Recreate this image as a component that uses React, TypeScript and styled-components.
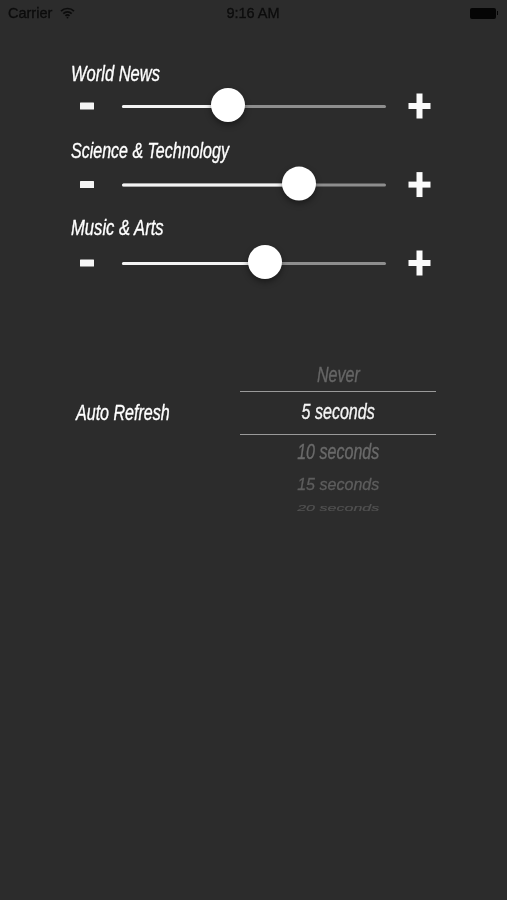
import React from 'react'
import styled, { createGlobalStyle } from 'styled-components'

const GlobalStyle = createGlobalStyle`
  html, body {
    margin: 0;
    padding: 0;
    background: #2c2c2c;
  }
`

const Screen = styled.div`
  width: 507px;
  height: 900px;
  overflow: hidden;
  background: #2c2c2c;
  font-family: "Liberation Sans", Arial, sans-serif;
  color: #fff;
`

const StatusBar = styled.div`
  height: 26px;
  padding: 0 9px 0 8px;
  display: grid;
  grid-template-columns: 1fr auto 1fr;
  align-items: center;
  color: #0c0c0c;
  font-size: 14.5px;
  -webkit-text-stroke: 0.3px #0c0c0c;
  filter: blur(0.5px);
`

const StatusLeft = styled.div`
  display: flex;
  align-items: center;
  gap: 8px;
`

const Battery = styled.div`
  justify-self: end;
  display: flex;
  align-items: center;
  gap: 1px;

  &::before {
    content: '';
    width: 26px;
    height: 11px;
    border-radius: 2px;
    background: #050505;
  }

  &::after {
    content: '';
    width: 1.5px;
    height: 4px;
    background: #050505;
  }
`

const Sliders = styled.section`
  margin-top: 32px;
  padding-left: 71px;
  display: flex;
  flex-direction: column;
  gap: 13px;
`

const Channel = styled.div`
  display: flex;
  flex-direction: column;
`

const Condensed = styled.span<{ $x?: number; $y?: number }>`
  display: inline-block;
  font-style: italic;
  white-space: nowrap;
  -webkit-text-stroke: 0.35px currentColor;
  transform: scale(${p => p.$x ?? 0.73}, ${p => p.$y ?? 1});
  filter: blur(0.3px);
`

const ChannelLabel = styled.div`
  height: 32px;
  line-height: 32px;
  font-size: 22px;

  ${Condensed} {
    transform-origin: left center;
  }
`

const SliderRow = styled.div<{ $drop: number }>`
  height: 32px;
  display: flex;
  align-items: center;
  transform: translateY(${p => p.$drop}px);
`

const StepIcon = styled.svg`
  display: block;
  flex: none;
  margin-top: -1px;
  filter: blur(0.3px);
`

const Track = styled.div`
  position: relative;
  width: 264px;
  height: 3px;
  margin: 1px 22px 0 28px;
  border-radius: 2px;
  background: #8e8e8e;
`

const TrackFill = styled.div`
  height: 100%;
  border-radius: 2px;
  background: #f4f4f4;
`

const Thumb = styled.div`
  position: absolute;
  top: 50%;
  width: 34px;
  height: 34px;
  margin: -19px 0 0 -17px;
  border-radius: 50%;
  background: #fff;
  box-shadow: 0 3px 6px rgba(0, 0, 0, 0.4);
`

const RefreshRow = styled.section`
  margin-top: 79px;
  padding-left: 76px;
  display: flex;
  align-items: flex-start;
`

const RefreshLabel = styled.div`
  width: 164px;
  margin-top: 41.5px;
  font-size: 22px;
  line-height: 32px;

  ${Condensed} {
    transform-origin: left center;
  }
`

const Picker = styled.div`
  width: 196px;
  height: 158.5px;
  overflow: hidden;
  display: flex;
  flex-direction: column;
`

const PickerItem = styled.div<{ $h: number; $lh?: number; $color: string; $selected?: boolean }>`
  flex: none;
  box-sizing: border-box;
  height: ${p => p.$h}px;
  line-height: ${p => p.$lh ?? p.$h}px;
  text-align: center;
  font-size: 22px;
  color: ${p => p.$color};
  ${p => (p.$selected ? 'border-top: 1.5px solid #9a9a9a; border-bottom: 1.5px solid #9a9a9a;' : '')}
`

const channels = [
  { name: 'World News', value: 0.387, squeeze: 0.75, drop: 0 },
  { name: 'Science & Technology', value: 0.696, squeeze: 0.728, drop: 1.6 },
  { name: 'Music & Arts', value: 0.548, squeeze: 0.755, drop: 3 },
]

const THUMB = 34
const TRACK = 264

export default function App() {
  return (
    <Screen>
      <GlobalStyle />
      <StatusBar>
        <StatusLeft>
          <span>Carrier</span>
          <svg width="15" height="12" viewBox="0 0 15 12" fill="none" stroke="#0c0c0c" strokeWidth="1.7">
            <path d="M1 4.2a9.2 9.2 0 0 1 13 0" />
            <path d="M3.3 6.6a5.9 5.9 0 0 1 8.4 0" />
            <path d="M5.5 8.8a2.8 2.8 0 0 1 4 0" />
            <circle cx="7.5" cy="10.6" r="0.9" fill="#0c0c0c" stroke="none" />
          </svg>
        </StatusLeft>
        <span>9:16 AM</span>
        <Battery />
      </StatusBar>

      <Sliders>
        {channels.map(c => {
          const center = THUMB / 2 + c.value * (TRACK - THUMB)
          return (
            <Channel key={c.name}>
              <ChannelLabel>
                <Condensed $x={c.squeeze}>{c.name}</Condensed>
              </ChannelLabel>
              <SliderRow $drop={c.drop}>
                <StepIcon width="23" height="20" viewBox="0 0 23 20" fill="#f6f6f6">
                  <rect x="9" y="6.5" width="14" height="7" rx="0.5" />
                </StepIcon>
                <Track>
                  <TrackFill style={{ width: center }} />
                  <Thumb style={{ left: center }} />
                </Track>
                <StepIcon width="23" height="26" viewBox="0 0 23 26" fill="#fbfbfb">
                  <rect x="0.5" y="10" width="22" height="6" />
                  <rect x="8.5" y="0.5" width="6" height="25" />
                </StepIcon>
              </SliderRow>
            </Channel>
          )
        })}
      </Sliders>

      <RefreshRow>
        <RefreshLabel>
          <Condensed>Auto Refresh</Condensed>
        </RefreshLabel>
        <Picker>
          <PickerItem $h={36} $lh={39} $color="#666666">
            <Condensed>Never</Condensed>
          </PickerItem>
          <PickerItem $h={43.5} $lh={40} $color="#f4f4f4" $selected>
            <Condensed>5 seconds</Condensed>
          </PickerItem>
          <PickerItem $h={34} $color="#6a6a6a">
            <Condensed>10 seconds</Condensed>
          </PickerItem>
          <PickerItem $h={32} $color="#5e5e5e">
            <Condensed $y={0.78}>15 seconds</Condensed>
          </PickerItem>
          <PickerItem $h={14} $color="#525252">
            <Condensed $y={0.45}>20 seconds</Condensed>
          </PickerItem>
        </Picker>
      </RefreshRow>
    </Screen>
  )
}
